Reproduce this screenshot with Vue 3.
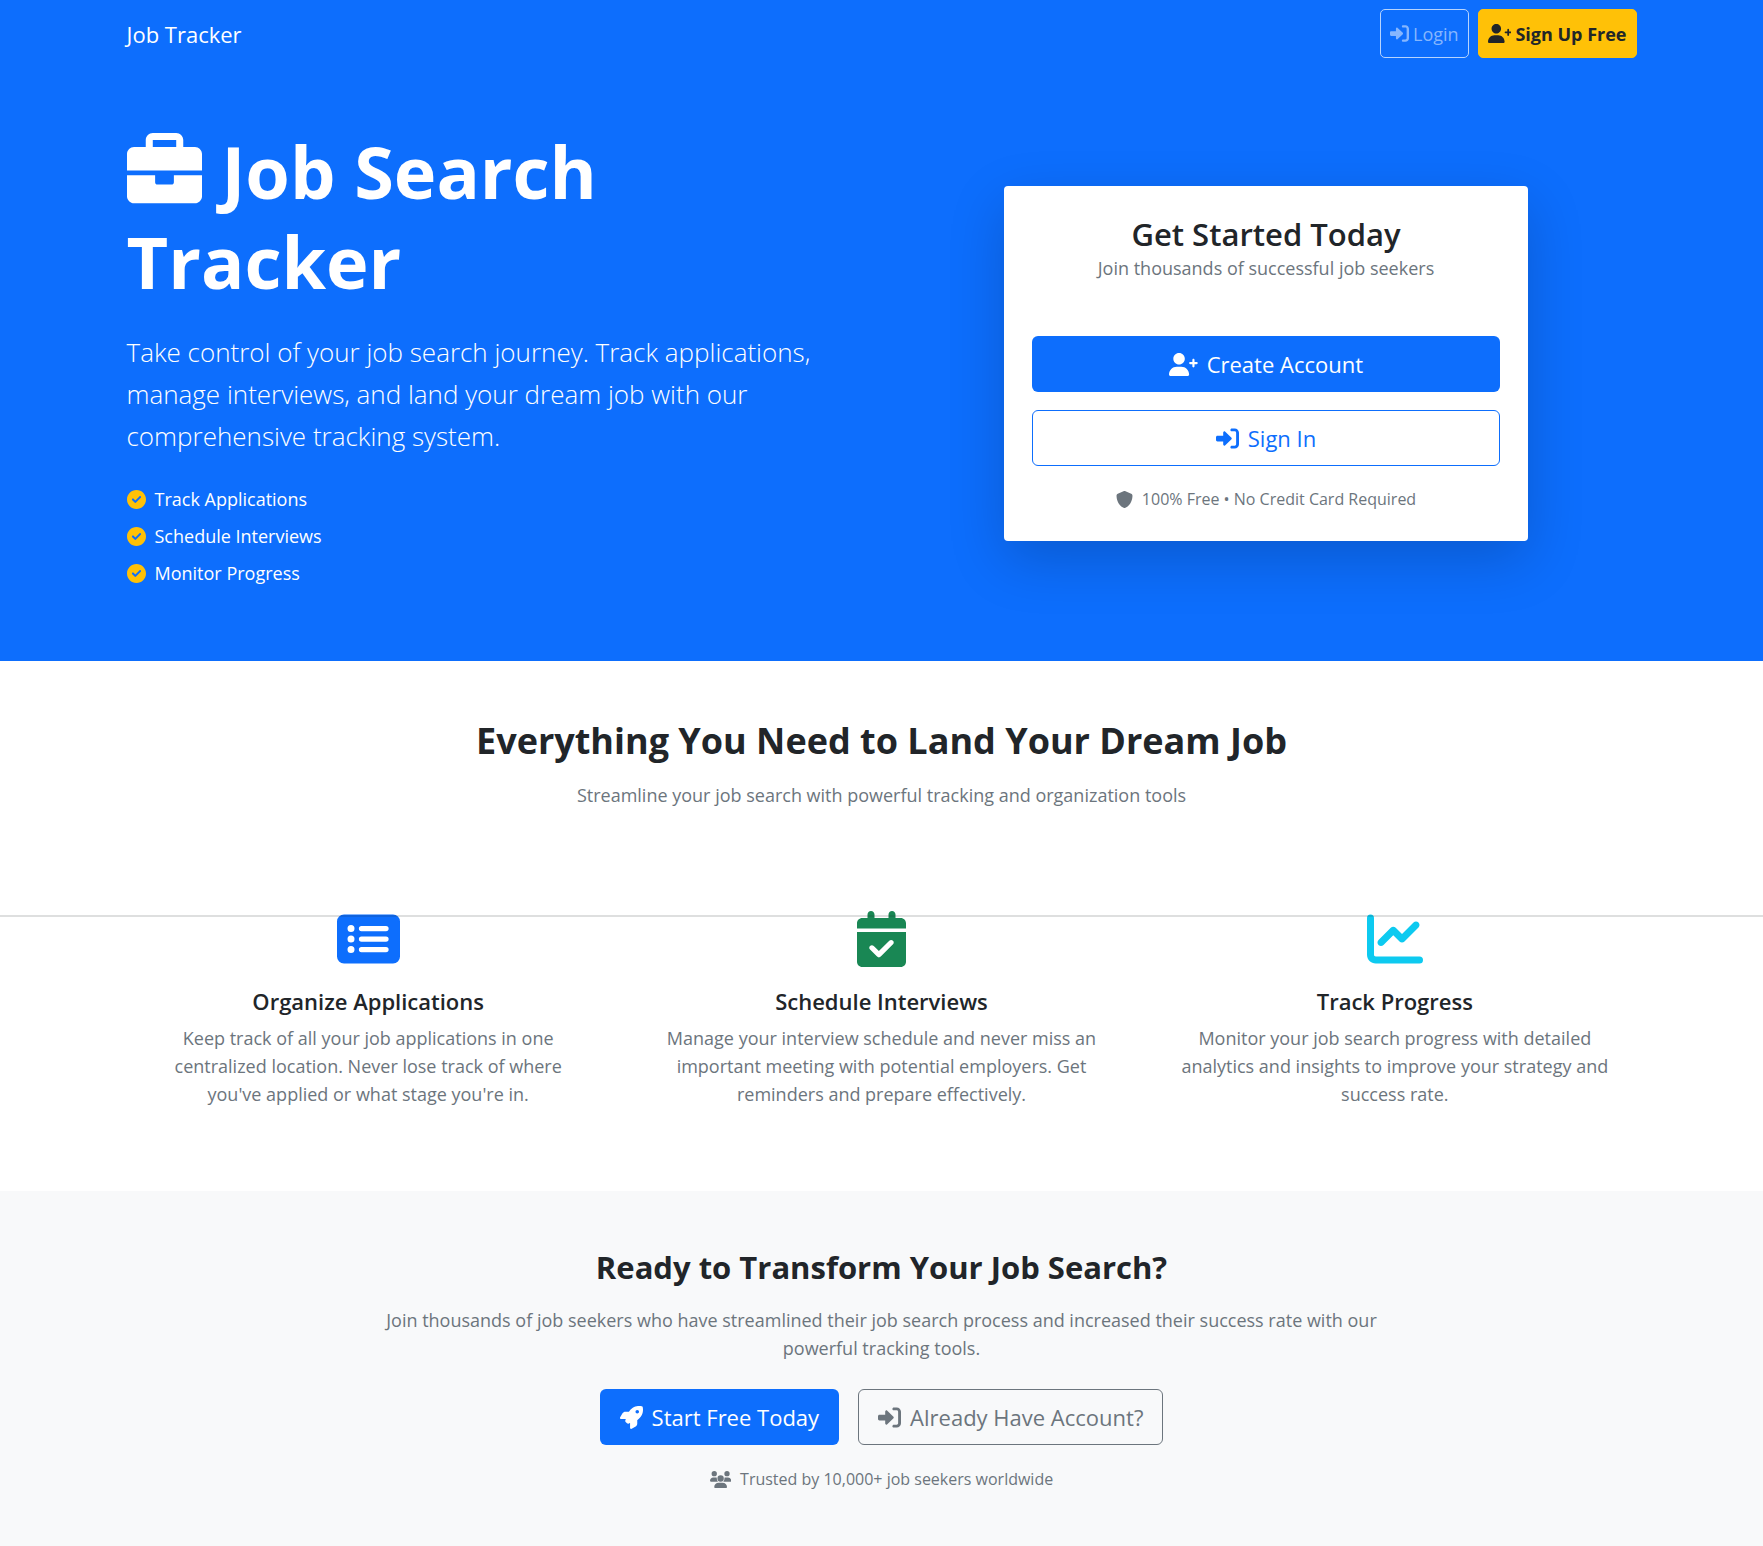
<script setup>
const icons = {
  login: { w: 512, d: 'M344.7 238.5l-144.1-136C193.7 95.97 183.4 94.17 174.6 97.95C165.8 101.8 160.1 110.4 160.1 120V192H32.02C14.33 192 0 206.3 0 224v64c0 17.68 14.33 32 32.02 32h128.1v72c0 9.578 5.707 18.25 14.51 22.05c8.803 3.781 19.03 1.984 26-4.594l144.1-136C354.3 264.1 354.3 247.9 344.7 238.5zM416 32h-64c-17.67 0-32 14.33-32 32s14.33 32 32 32h64c17.67 0 32 14.33 32 32v256c0 17.67-14.33 32-32 32h-64c-17.67 0-32 14.33-32 32s14.33 32 32 32h64c53.02 0 96-42.98 96-96V128C512 74.98 469 32 416 32z' },
  userPlus: { w: 640, d: 'M224 256c70.7 0 128-57.31 128-128S294.7 0 224 0C153.3 0 96 57.31 96 128S153.3 256 224 256zM274.7 304H173.3C77.61 304 0 381.6 0 477.3C0 496.5 15.52 512 34.66 512h378.7C432.5 512 448 496.5 448 477.3C448 381.6 370.4 304 274.7 304zM616 200h-48v-48C568 138.8 557.3 128 544 128s-24 10.75-24 24v48h-48C458.8 200 448 210.8 448 224s10.75 24 24 24h48v48C520 309.3 530.8 320 544 320s24-10.75 24-24v-48h48C629.3 248 640 237.3 640 224S629.3 200 616 200z' },
  briefcase: { w: 512, d: 'M320 336c0 8.844-7.156 16-16 16h-96C199.2 352 192 344.8 192 336V288H0v144C0 457.6 22.41 480 48 480h416c25.59 0 48-22.41 48-48V288h-192V336zM464 96H384V48C384 22.41 361.6 0 336 0h-160C150.4 0 128 22.41 128 48V96H48C22.41 96 0 118.4 0 144V256h512V144C512 118.4 489.6 96 464 96zM336 96h-160V48h160V96z' },
  check: { w: 512, d: 'M0 256C0 114.6 114.6 0 256 0s256 114.6 256 256-114.6 256-256 256S0 397.4 0 256zM371.8 211.8C382.7 200.9 382.7 183.1 371.8 172.2 360.9 161.3 343.1 161.3 332.2 172.2L224 280.4 179.8 236.2C168.9 225.3 151.1 225.3 140.2 236.2 129.3 247.1 129.3 264.9 140.2 275.8L204.2 339.8C215.1 350.7 232.9 350.7 243.8 339.8L371.8 211.8z' },
  shield: { w: 512, d: 'M256 0c4.6 0 9.2 1 13.4 2.9L457.7 82.8c22 9.3 38.4 31 38.3 57.2c-.5 99.2-41.3 280.7-213.6 363.2c-16.7 8-36.1 8-52.8 0C57.3 420.7 16.5 239.2 16 140c-.1-26.2 16.3-47.9 38.3-57.2L242.7 2.9C246.8 1 251.4 0 256 0z' },
  list: { w: 576, d: 'M64 32h448a64 64 0 0 1 64 64v320a64 64 0 0 1-64 64H64a64 64 0 0 1-64-64V96a64 64 0 0 1 64-64zM128 128a32 32 0 1 0 0 64a32 32 0 1 0 0-64zM128 224a32 32 0 1 0 0 64a32 32 0 1 0 0-64zM128 320a32 32 0 1 0 0 64a32 32 0 1 0 0-64zM224 136a24 24 0 0 0 0 48h224a24 24 0 0 0 0-48zM224 232a24 24 0 0 0 0 48h224a24 24 0 0 0 0-48zM224 328a24 24 0 0 0 0 48h224a24 24 0 0 0 0-48z' },
  calendar: { w: 448, d: 'M128 0c17.7 0 32 14.3 32 32v32h128V32c0-17.7 14.3-32 32-32s32 14.3 32 32v32h48c26.5 0 48 21.5 48 48v48H0v-48c0-26.5 21.5-48 48-48h48V32c0-17.7 14.3-32 32-32zM0 192h448v272c0 26.5-21.5 48-48 48H48c-26.5 0-48-21.5-48-48V192zM329 305c9.4-9.4 9.4-24.6 0-33.9s-24.6-9.4-33.9 0l-95 95-47-47c-9.4-9.4-24.6-9.4-33.9 0s-9.4 24.6 0 33.9l64 64c9.4 9.4 24.6 9.4 33.9 0L329 305z' },
  chart: { w: 512, d: 'M64 400V64a32 32 0 0 0-64 0v336c0 44.2 35.8 80 80 80h400a32 32 0 0 0 0-64H80c-8.8 0-16-7.2-16-16zM470.6 150.6c12.5-12.5 12.5-32.8 0-45.3s-32.8-12.5-45.3 0L320 210.7l-57.4-57.4c-12.5-12.5-32.8-12.5-45.3 0l-112 112c-12.5 12.5-12.5 32.8 0 45.3s32.8 12.5 45.3 0L240 221.3l57.4 57.4c12.5 12.5 32.8 12.5 45.3 0l128-128z' },
  rocket: { w: 512, d: 'M156.6 384.9L125.7 354c-8.5-8.5-11.5-20.8-7.7-32.2c3-8.9 7-20.5 11.8-33.8L24 288c-8.6 0-16.6-4.6-20.9-12.1s-4.2-16.7 .2-24.1l52.5-88.5c13-21.9 36.5-35.3 61.9-35.3l82.3 0c2.4-4 4.8-7.7 7.2-11.3C289.1-4.1 411.1-8.1 483.9 5.3c11.6 2.1 20.6 11.2 22.8 22.8c13.4 72.9 9.3 194.8-111.4 276.7c-3.5 2.4-7.3 4.8-11.3 7.2v82.3c0 25.4-13.4 49-35.3 61.9l-88.5 52.5c-7.4 4.4-16.6 4.5-24.1 .2s-12.1-12.2-12.1-20.9V380.8c-14.1 4.9-26.4 8.9-35.7 11.9c-11.2 3.6-23.4 .5-31.8-7.8zM384 168a40 40 0 1 0 0-80 40 40 0 1 0 0 80z' },
  users: { w: 640, d: 'M128 0a80 80 0 1 1 0 160a80 80 0 1 1 0-160zM512 0a80 80 0 1 1 0 160a80 80 0 1 1 0-160zM320 128a96 96 0 1 1 0 192a96 96 0 1 1 0-192zM96 192h64c18 0 34 5 48 13c-10 42 2 83 31 115H24c-14 0-24-11-24-24c0-57 43-104 96-104zM480 192h64c53 0 96 47 96 104c0 13-10 24-24 24H401c29-32 41-73 31-115c14-8 30-13 48-13zM261 352h118c74 0 133 57 133 128c0 18-15 32-33 32H161c-18 0-33-14-33-32c0-71 59-128 133-128z' },
}

const points = ['Track Applications', 'Schedule Interviews', 'Monitor Progress']

const features = [
  { icon: 'list', tone: 'primary', title: 'Organize Applications', text: "Keep track of all your job applications in one centralized location. Never lose track of where you've applied or what stage you're in." },
  { icon: 'calendar', tone: 'success', title: 'Schedule Interviews', text: 'Manage your interview schedule and never miss an important meeting with potential employers. Get reminders and prepare effectively.' },
  { icon: 'chart', tone: 'info', title: 'Track Progress', text: 'Monitor your job search progress with detailed analytics and insights to improve your strategy and success rate.' },
]
</script>

<template>
  <div class="page">
    <header class="navbar">
      <div class="container nav-row">
        <a class="brand" href="#">Job Tracker</a>
        <nav class="nav-actions">
          <a class="btn btn-login" href="#login">
            <svg class="icon" :viewBox="`0 0 ${icons.login.w} 512`" aria-hidden="true"><path :d="icons.login.d" /></svg>Login
          </a>
          <a class="btn btn-signup" href="#signup">
            <svg class="icon" :viewBox="`0 0 ${icons.userPlus.w} 512`" aria-hidden="true"><path :d="icons.userPlus.d" /></svg>Sign Up Free
          </a>
        </nav>
      </div>
    </header>

    <main>
      <section class="hero">
        <div class="container hero-row">
          <div class="intro">
            <h1>
              <svg class="icon" :viewBox="`0 0 ${icons.briefcase.w} 512`" aria-hidden="true"><path :d="icons.briefcase.d" /></svg>Job Search Tracker
            </h1>
            <p class="lead">
              Take control of your job search journey. Track applications, manage interviews, and land your dream job with our comprehensive tracking system.
            </p>
            <ul class="points">
              <li v-for="point in points" :key="point">
                <svg class="icon" :viewBox="`0 0 ${icons.check.w} 512`" aria-hidden="true"><path fill-rule="evenodd" :d="icons.check.d" /></svg>{{ point }}
              </li>
            </ul>
          </div>
          <div class="signup">
            <div class="card">
              <h2>Get Started Today</h2>
              <p class="card-sub">Join thousands of successful job seekers</p>
              <div class="card-actions">
                <a class="btn btn-lg btn-primary" href="#signup">
                  <svg class="icon" :viewBox="`0 0 ${icons.userPlus.w} 512`" aria-hidden="true"><path :d="icons.userPlus.d" /></svg>Create Account
                </a>
                <a class="btn btn-lg btn-outline" href="#login">
                  <svg class="icon" :viewBox="`0 0 ${icons.login.w} 512`" aria-hidden="true"><path :d="icons.login.d" /></svg>Sign In
                </a>
              </div>
              <p class="note">
                <svg class="icon" :viewBox="`0 0 ${icons.shield.w} 512`" aria-hidden="true"><path :d="icons.shield.d" /></svg>100% Free • No Credit Card Required
              </p>
            </div>
          </div>
        </div>
      </section>

      <section class="features">
        <h2>Everything You Need to Land Your Dream Job</h2>
        <p class="muted">Streamline your job search with powerful tracking and organization tools</p>
        <div class="feature-band">
          <div class="feature-row">
            <article v-for="f in features" :key="f.title" class="feature">
              <svg class="icon" :class="f.tone" :viewBox="`0 0 ${icons[f.icon].w} 512`" aria-hidden="true"><path fill-rule="evenodd" :d="icons[f.icon].d" /></svg>
              <h3>{{ f.title }}</h3>
              <p class="muted">{{ f.text }}</p>
            </article>
          </div>
        </div>
      </section>

      <section class="cta">
        <div class="cta-inner">
          <h2>Ready to Transform Your Job Search?</h2>
          <p class="muted">
            Join thousands of job seekers who have streamlined their job search process and increased their success rate with our powerful tracking tools.
          </p>
          <div class="cta-actions">
            <a class="btn btn-lg btn-primary" href="#signup">
              <svg class="icon" :viewBox="`0 0 ${icons.rocket.w} 512`" aria-hidden="true"><path fill-rule="evenodd" :d="icons.rocket.d" /></svg>Start Free Today
            </a>
            <a class="btn btn-lg btn-secondary" href="#login">
              <svg class="icon" :viewBox="`0 0 ${icons.login.w} 512`" aria-hidden="true"><path :d="icons.login.d" /></svg>Already Have Account?
            </a>
          </div>
          <p class="note">
            <svg class="icon" :viewBox="`0 0 ${icons.users.w} 512`" aria-hidden="true"><path :d="icons.users.d" /></svg>Trusted by 10,000+ job seekers worldwide
          </p>
        </div>
      </section>
    </main>
  </div>
</template>

<style>
body {
  margin: 0;
  background: #f8f9fa;
}
</style>

<style scoped>
.page {
  font-family: 'Segoe UI', 'Open Sans', 'Noto Sans', sans-serif;
  font-size: 18px;
  line-height: 28px;
  color: #212529;
}
.page * {
  box-sizing: border-box;
}
h1, h2, h3, p, ul {
  margin: 0;
  padding: 0;
}
a {
  text-decoration: none;
  color: inherit;
}
.icon {
  height: 19px;
  width: auto;
  fill: currentColor;
  flex: none;
}
.container {
  max-width: 1540px;
  margin: 0 auto;
  padding: 0 15px;
}
.navbar {
  background: #0d6efd;
  color: #fff;
  padding: 9px 0;
}
.nav-row {
  display: flex;
  align-items: center;
  justify-content: space-between;
}
.brand {
  font-size: 22px;
}
.nav-actions {
  display: flex;
  gap: 9px;
}
.btn {
  display: flex;
  align-items: center;
  justify-content: center;
  gap: 4px;
  padding: 0 9px;
  height: 49px;
  border: 1px solid transparent;
  border-radius: 5px;
  white-space: nowrap;
}
.btn-login {
  border-color: #b6d4fe;
  color: #86b6fe;
}
.btn-signup {
  background: #ffc107;
  border-color: #ffc107;
  color: #212529;
  font-weight: 700;
}
.btn-lg {
  font-size: 22px;
  height: 56px;
  padding: 0 19px;
  gap: 9px;
  border-radius: 6px;
}
.btn-lg .icon {
  height: 23px;
}
.btn-primary {
  background: #0d6efd;
  color: #fff;
}
.btn-outline {
  border-color: #0d6efd;
  color: #0d6efd;
}
.btn-secondary {
  border-color: #6c757d;
  color: #6c757d;
}
.hero {
  background: #0d6efd;
  color: #fff;
  padding: 59px 0 74px;
}
.hero-row {
  display: flex;
  align-items: center;
  gap: 28px;
}
.intro,
.signup {
  flex: 1 1 0;
  min-width: 0;
}
.signup {
  padding-top: 14px;
}
h1 {
  font-size: 72px;
  line-height: 90px;
  font-weight: 700;
}
h1 .icon {
  height: 75px;
  margin-right: 20px;
  vertical-align: -9px;
}
.lead {
  margin-top: 25px;
  font-size: 26px;
  line-height: 42px;
  font-weight: 300;
}
.points {
  margin-top: 28px;
  list-style: none;
  display: grid;
  gap: 9px;
}
.points li {
  display: flex;
  align-items: center;
  gap: 9px;
}
.points .icon {
  color: #ffc107;
}
.card {
  max-width: 524px;
  margin: 0 auto;
  padding: 28px;
  background: #fff;
  color: #212529;
  border-radius: 4px;
  text-align: center;
  box-shadow: 0 19px 56px rgba(0, 0, 0, 0.18);
}
.card h2 {
  font-size: 31px;
  line-height: 40px;
  font-weight: 600;
}
.card-sub {
  color: #6c757d;
}
.card-actions {
  margin: 54px 0 19px;
  display: grid;
  gap: 18px;
}
.note {
  display: flex;
  align-items: center;
  justify-content: center;
  gap: 9px;
  font-size: 16px;
  color: #6c757d;
}
.note .icon {
  height: 17px;
}
.muted {
  color: #6c757d;
}
.features {
  background: #fff;
  padding: 56px 0 83px;
  text-align: center;
}
.features > h2 {
  font-size: 36px;
  line-height: 48px;
  font-weight: 700;
}
.features > .muted {
  margin-top: 16px;
}
.feature-band {
  position: relative;
  margin-top: 102px;
}
/* Translucent rule that crosses the full width over the icons */
.feature-band::after {
  content: '';
  position: absolute;
  top: 4px;
  left: 0;
  right: 0;
  height: 2px;
  background: rgba(33, 37, 41, 0.15);
}
.feature-row {
  max-width: 1540px;
  margin: 0 auto;
  display: grid;
  grid-template-columns: repeat(3, 1fr);
}
.feature {
  padding: 0 42px;
}
.feature .icon {
  display: block;
  height: 56px;
  margin: 0 auto;
}
.feature h3 {
  margin: 20px 0 9px;
  font-size: 22px;
  line-height: 28px;
  font-weight: 600;
}
.primary { color: #0d6efd; }
.success { color: #198754; }
.info { color: #0dcaf0; }
.cta {
  background: #f8f9fa;
  padding: 56px 0;
  text-align: center;
}
.cta-inner {
  max-width: 1000px;
  margin: 0 auto;
}
.cta h2 {
  font-size: 31px;
  line-height: 40px;
  font-weight: 700;
}
.cta .muted {
  margin-top: 19px;
}
.cta-actions {
  margin: 27px 0 20px;
  display: flex;
  justify-content: center;
  gap: 19px;
}
</style>
